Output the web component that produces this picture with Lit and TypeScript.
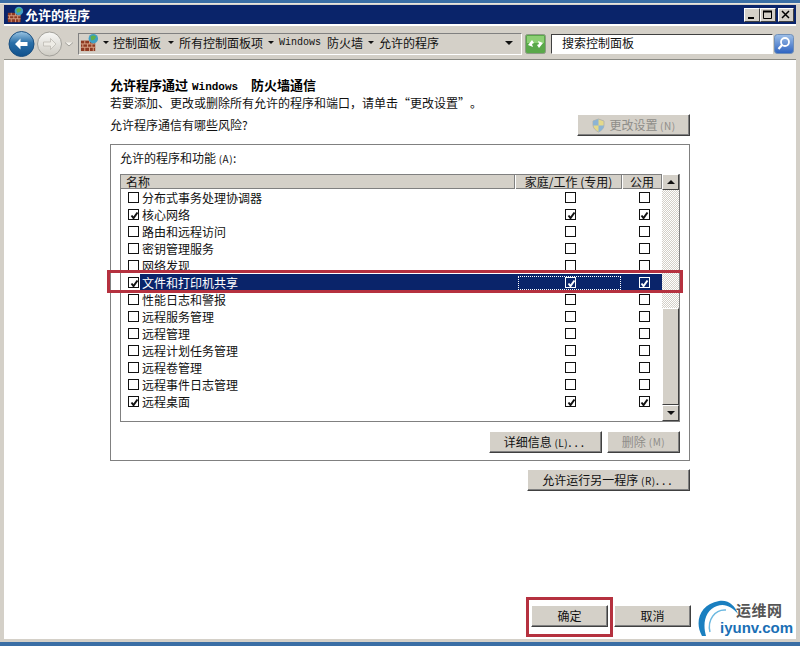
import { LitElement, html, css, svg } from "lit";
import { customElement } from "lit/decorators.js";

const rows: [string, boolean, boolean, boolean][] = [
  ["分布式事务处理协调器", false, false, false],
  ["核心网络", true, true, true],
  ["路由和远程访问", false, false, false],
  ["密钥管理服务", false, false, false],
  ["网络发现", false, false, false],
  ["文件和打印机共享", true, true, true],
  ["性能日志和警报", false, false, false],
  ["远程服务管理", false, false, false],
  ["远程管理", false, false, false],
  ["远程计划任务管理", false, false, false],
  ["远程卷管理", false, false, false],
  ["远程事件日志管理", false, false, false],
  ["远程桌面", true, true, true],
];

const wall = (s: number) => html`<svg width=${s} height=${s} viewBox="0 0 20 20">
  <rect x="1" y="8" width="15" height="11" fill="#8e3a22"/>
  <path d="M1 11.5h15M1 15h15M5 8v3.5M10 8v3.5M14 8v3.5M3 11.5V15M8 11.5V15M12.500 11.500V15M5 15v4M10 15v4M14 15v4" stroke="#d9a488" stroke-width="1" fill="none"/>
  <circle cx="14" cy="6" r="5" fill="#3f9fc4"/>
  <path d="M11 4c2-2 4-2 6 0l-2 3-3 1z" fill="#5fb04a"/>
</svg>`;

const check = svg`<path d="M2.500 5.500l2 2.500 4-5.500" stroke="currentColor" stroke-width="2" fill="none"/>`;

@customElement("app-root")
export class AppRoot extends LitElement {
  static styles = css`
    :host {
      display: block;
      width: 800px;
      height: 646px;
      position: relative;
      overflow: hidden;
      background: #3a6ea5;
      font-family: "Noto Sans CJK SC", "Liberation Sans", sans-serif;
      font-size: 12px;
      line-height: 14px;
      color: #111;
    }
    .window {
      margin-top: 3px;
      height: 639px;
      box-sizing: border-box;
      background: #d4d0c8;
      padding: 1px 4px 3px 4px;
      display: flex;
      flex-direction: column;
      border-top: 1px solid #e8e6e0;
    }
    .title {
      height: 19px;
      flex: none;
      background: #0a246a;
      color: #fff;
      font-weight: 700;
      font-size: 13px;
      display: flex;
      align-items: center;
      padding: 0 2px 0 3px;
      gap: 1px;
      border-bottom: 1px solid #fff;
    }
    .title span { flex: 1; }
    .wb {
      width: 16px;
      height: 14px;
      box-sizing: border-box;
      background: #d4d0c8;
      border: 1px solid;
      border-color: #fff #404040 #404040 #fff;
      display: flex;
      align-items: center;
      justify-content: center;
    }
    .wb.close { margin-left: 2px; }
    .caps { display: flex; }
    .toolbar {
      height: 35px;
      flex: none;
      display: flex;
      align-items: center;
      padding: 3px 0 0 3px;
      box-sizing: border-box;
      border-bottom: 1px solid #8a8a84;
      border-top: 1px solid #fff;
    }
    .nav { display: flex; align-items: center; width: 71px; flex: none; }
    .crumb {
      width: 444px;
      height: 22px;
      box-sizing: border-box;
      flex: none;
      border: 1px solid;
      border-color: #808080 #fff #fff #808080;
      display: flex;
      align-items: center;
      padding: 0 0 3px 1px;
      gap: 5px;
      font-size: 12px;
      white-space: nowrap;
    }
    .crumb .spacer { flex: 1; }
    .crumb .mono { font-size: 10px; }
    .tri {
      width: 0;
      height: 0;
      border-left: 3px solid transparent;
      border-right: 3px solid transparent;
      border-top: 3px solid #111;
      flex: none;
    }
    .tri.t1 { margin-left: -1px; }
    .tri.t2 { margin-left: 2px; }
    .tri.big { border-width: 4px 4px 0; margin-right: 8px; }
    .nudge-l { margin-left: -1px; }
    .nudge-r { margin-left: 1px; }
    .mono { font-family: "Liberation Mono", monospace; font-size: 11px; }
    .go { margin-left: 3px; flex: none; display: flex; }
    .search {
      margin-left: 5px;
      width: 222px;
      height: 20px;
      flex: none;
      box-sizing: border-box;
      background: #fff;
      border: 1px solid;
      border-color: #404040 #fff #fff #404040;
      padding: 1px 10px;
      font-size: 12px;
    }
    .sbtn { margin-left: 1px; flex: none; display: flex; }
    .content {
      flex: 1;
      background: #fff;
      padding: 17px 106px 0 106px;
      position: relative;
      border-top: 1px solid #fff;
    }
    h1 { font-size: 13px; font-weight: 700; margin: 0; line-height: 14px; color: #000; }
    h1 .mono { font-weight: 700; margin: 0 10px 0 1px; }
    .desc { margin-top: 2px; line-height: 14px; }
    .q { display: inline-block; width: 12px; }
    .q.open { text-align: right; }
    .riskrow {
      display: flex;
      justify-content: space-between;
      align-items: flex-start;
      margin-top: 4px;
    }
    .risk { margin-top: 4px; }
    button {
      font: inherit;
      font-size: 12px;
      line-height: 14px;
      background: #d4d0c8;
      color: #111;
      border: 1px solid;
      border-color: #fff #404040 #404040 #fff;
      box-shadow: inset -1px -1px 0 #808080;
      padding: 0;
      display: flex;
      align-items: center;
      justify-content: center;
      box-sizing: border-box;
      gap: 3px;
      flex: none;
      white-space: nowrap;
    }
    button.dis { color: #8f8d88; }
    .b113 { width: 113px; height: 22px; }
    .small { font-size: 10px; letter-spacing: 0.500px; }
    .dots { letter-spacing: 3px; }
    .group {
      margin-top: 8px;
      height: 317px;
      box-sizing: border-box;
      border: 1px solid #808080;
      padding: 6px 9px 0 9px;
    }
    .list {
      margin-top: 8px;
      height: 248px;
      box-sizing: border-box;
      border-right: 1px solid #808080;
      border-bottom: 1px solid #808080;
      border-left: 1px solid #808080;
      display: flex;
    }
    .list-main { flex: 1; min-width: 0; }
    .grid-head {
      display: grid;
      grid-template-columns: 394px 107px 1fr;
      height: 15px;
      background: #d4d0c8;
      box-sizing: border-box;
      border-bottom: 1px solid #808080;
      line-height: 14px;
      border-top: 1px solid #808080;
    }
    .grid-head div { border-right: 1px solid #808080; border-left: 1px solid #fff; text-align: center; }
    .grid-head div:first-child { text-align: left; padding-left: 5px; border-left: none; }
    .row {
      display: grid;
      grid-template-columns: 394px 107px 1fr;
      height: 17px;
      align-items: center;
    }
    .row:first-of-type { margin-top: 2px; }
    .rowname { display: flex; align-items: center; height: 17px; padding-left: 7px; gap: 2px; }
    .rowname span { padding: 0 1px; }
    .c { display: flex; justify-content: center; align-items: center; height: 17px; padding-left: 4px; position: relative; }
    .box {
      width: 11px;
      height: 11px;
      box-sizing: border-box;
      border: 1px solid #111;
      background: #fff;
      color: #111;
      display: block;
      flex: none;
    }
    .box svg { display: block; margin: -0.500px; }
    .sel { background: #0a246a; color: #fff; }
    .sel .rowname { background: linear-gradient(90deg, #fff 19px, transparent 19px); }
    .sel .c .box { background: #0a246a; border-color: #fff; color: #fff; }
    .focus {
      position: absolute;
      left: 3px;
      right: 1px;
      top: 2px;
      bottom: 1px;
      outline: 1px dotted #fff;
      outline-offset: -1px;
    }
    .scroll {
      width: 17px;
      flex: none;
      display: flex;
      flex-direction: column;
      background-color: #eeece8;
      background-image: repeating-conic-gradient(#d4d0c8 0 25%, #fff 0 50%);
      background-size: 2px 2px;
    }
    .sb {
      width: 17px;
      height: 16px;
      flex: none;
      background: #d4d0c8;
      box-sizing: border-box;
      border: 1px solid;
      border-color: #fff #404040 #404040 #fff;
      display: flex;
      align-items: center;
      justify-content: center;
    }
    .up { border-bottom: 4px solid #111; border-left: 4px solid transparent; border-right: 4px solid transparent; }
    .dn { border-top: 4px solid #111; border-left: 4px solid transparent; border-right: 4px solid transparent; }
    .track1 { height: 118px; flex: none; }
    .thumb {
      flex: 1;
      background: #d4d0c8;
      border: 1px solid;
      border-color: #fff #404040 #404040 #fff;
      box-sizing: border-box;
    }
    .lower { display: flex; justify-content: flex-end; gap: 5px; margin-top: 9px; }
    .lower .d { width: 113px; height: 22px; }
    .lower .r { width: 73px; height: 22px; }
    .another { display: flex; justify-content: flex-end; margin-top: 8px; }
    .another button { width: 163px; height: 22px; }
    .footer {
      position: absolute;
      right: 105px;
      bottom: 12px;
      display: flex;
      gap: 6px;
    }
    .footer button { width: 77px; height: 22px; }
    .redbox { position: absolute; border: 3px solid #b5313f; box-sizing: border-box; pointer-events: none; }
    .r1 { left: 107px; top: 270px; width: 576px; height: 23px; }
    .r2 { left: 526px; top: 597px; width: 87px; height: 40px; }
    .logo {
      position: absolute;
      left: 695px;
      top: 598px;
      width: 103px;
      height: 44px;
    }
    .logo .cn {
      position: absolute;
      left: 41px;
      top: 3px;
      font-size: 15px;
      line-height: 17px;
      font-weight: 700;
      color: #555;
      letter-spacing: 0.500px;
    }
    .logo .en {
      position: absolute;
      left: 25px;
      top: 21px;
      font-family: "Liberation Sans", sans-serif;
      font-size: 15px;
      line-height: 17px;
      font-weight: 700;
      color: #1a6fb5;
    }
    .logo svg { position: absolute; left: 0; top: 0; }
    .bottom { height: 4px; background: #3a6ea5; }
  `;

  private box(on: boolean) {
    return html`<i class="box">${on
      ? html`<svg width="11" height="11" viewBox="0 0 11 11">${check}</svg>`
      : ""}</i>`;
  }

  render() {
    return html`
      <div class="window">
        <div class="title">
          ${wall(17)}
          <span>允许的程序</span>
          <div class="caps">
            <div class="wb"><svg width="10" height="10" viewBox="0 0 10 10"><rect x="1" y="7" width="6" height="2" fill="#000"/></svg></div>
            <div class="wb"><svg width="10" height="10" viewBox="0 0 10 10"><path d="M.500 1.500h8v7h-8z" fill="none" stroke="#000"/><path d="M0 1.500h9" stroke="#000" stroke-width="2"/></svg></div>
            <div class="wb close"><svg width="10" height="10" viewBox="0 0 10 10"><path d="M1 1l7 7M8 1l-7 7" stroke="#000" stroke-width="1.500"/></svg></div>
          </div>
        </div>
        <div class="toolbar">
          <div class="nav">
            <svg width="71" height="28" viewBox="0 0 71 28">
              <defs>
                <linearGradient id="bl" x1="0" y1="0" x2="0" y2="1"><stop offset="0" stop-color="#9cc6e4"/><stop offset=".45" stop-color="#2a6fa8"/><stop offset="1" stop-color="#10508c"/></linearGradient>
                <linearGradient id="gr" x1="0" y1="0" x2="0" y2="1"><stop offset="0" stop-color="#f8f8f6"/><stop offset="1" stop-color="#cfccc4"/></linearGradient>
              </defs>
              <circle cx="14.500" cy="14" r="12.500" fill="url(#bl)" stroke="#1b4f80"/>
              <path d="M8 14l5.500-5.500v3.500h7v4h-7v3.500z" fill="#fff"/>
              <circle cx="42.500" cy="14" r="12" fill="url(#gr)" stroke="#a3a19b"/>
              <path d="M49 14l-5.500-5.500V12h-7v4h7v3.500z" fill="#eeece6" stroke="#b7b5ae" stroke-width=".7"/>
              <path d="M58 12.500l4 3.500 4-3.500" fill="#f3f1ec" stroke="#a3a19b"/>
            </svg>
          </div>
          <div class="crumb">
            ${wall(19)}
            <i class="tri t1"></i>
            <span class="nudge-l">控制面板</span>
            <i class="tri t2"></i>
            <span>所有控制面板项</span>
            <i class="tri"></i>
            <span class="mono">Windows</span><span class="nudge-r">防火墙</span>
            <i class="tri"></i>
            <span>允许的程序</span>
            <span class="spacer"></span>
            <i class="tri big"></i>
          </div>
          <div class="go">
            <svg width="21" height="20" viewBox="0 0 21 20">
              <rect x=".5" y=".5" width="20" height="19" rx="2" fill="#5aa84a" stroke="#8d9b85"/>
              <rect x="2" y="2" width="17" height="7" fill="#8ccf74"/>
              <path d="M3 11l4-5 2 3-2 1 1 3zM18 9l-4 5-2-3 2-1-1-3z" fill="#fff"/>
            </svg>
          </div>
          <div class="search">搜索控制面板</div>
          <div class="sbtn">
            <svg width="20" height="20" viewBox="0 0 20 20">
              <defs><linearGradient id="sb" x1="0" y1="0" x2="0" y2="1"><stop offset="0" stop-color="#9fc0e8"/><stop offset="1" stop-color="#2d62c0"/></linearGradient></defs>
              <rect x=".5" y=".5" width="19" height="19" rx="3" fill="url(#sb)" stroke="#6f8fb8"/>
              <circle cx="11" cy="8" r="4" fill="none" stroke="#fff" stroke-width="1.800"/>
              <path d="M8 11l-3.500 4" stroke="#fff" stroke-width="2.200"/>
            </svg>
          </div>
        </div>
        <div class="content">
          <h1>允许程序通过 <span class="mono">Windows</span> 防火墙通信</h1>
          <div class="desc">若要添加、更改或删除所有允许的程序和端口，请单击<span class="q open">“</span>更改设置<span class="q">”</span>。</div>
          <div class="riskrow">
            <div class="risk">允许程序通信有哪些风险?</div>
            <button class="b113 dis">
              <svg width="15" height="15" viewBox="0 0 15 15">
                <path d="M7.500 1l5.500 2v4c0 3-2.500 5.500-5.500 7C4.500 12.500 2 10 2 7V3z" fill="#e4d98a" stroke="#b6b4ac"/>
                <path d="M7.500 1v6.500H2V3zM7.500 7.500H13c0 3-2.500 5.500-5.500 6.500z" fill="#8db4d4"/>
              </svg>
              <span>更改设置 <span class="small">(N)</span></span>
            </button>
          </div>
          <div class="group">
            <div>允许的程序和功能 <span class="small">(A)</span>:</div>
            <div class="list">
              <div class="list-main">
                <div class="grid-head">
                  <div>名称</div><div>家庭/工作 (专用)</div><div>公用</div>
                </div>
                ${rows.map((r, i) => html`
                  <div class="row ${i === 5 ? "sel" : ""}">
                    <div class="rowname">${this.box(r[1])}<span>${r[0]}</span></div>
                    <div class="c">${i === 5 ? html`<div class="focus"></div>` : ""}${this.box(r[2])}</div>
                    <div class="c">${this.box(r[3])}</div>
                  </div>`)}
              </div>
              <div class="scroll">
                <div class="sb"><i class="up"></i></div>
                <div class="track1"></div>
                <div class="thumb"></div>
                <div class="sb"><i class="dn"></i></div>
              </div>
            </div>
            <div class="lower">
              <button class="d"><span>详细信息 <span class="small">(L)</span><span class="dots">...</span></span></button>
              <button class="r dis">删除 <span class="small">(M)</span></button>
            </div>
          </div>
          <div class="another"><button><span>允许运行另一程序 <span class="small">(R)</span><span class="dots">...</span></span></button></div>
          <div class="footer">
            <button>确定</button>
            <button>取消</button>
          </div>
        </div>
      </div>
      <div class="bottom"></div>
      <div class="redbox r1"></div>
      <div class="redbox r2"></div>
      <div class="logo">
        <svg width="60" height="44" viewBox="0 0 60 44">
          <path d="M7 38C-1 24 5 6 24 3c10-1.500 16 5 19 13-6-7-13-11-21-8C11 12 7 24 11 38z" fill="#1a7fc0"/>
          <path d="M15 34C12 22 20 11 31 12" fill="none" stroke="#6bb8e0" stroke-width="1.500"/>
        </svg>
        <div class="cn">运维网</div>
        <div class="en">iyunv.com</div>
      </div>
    `;
  }
}
